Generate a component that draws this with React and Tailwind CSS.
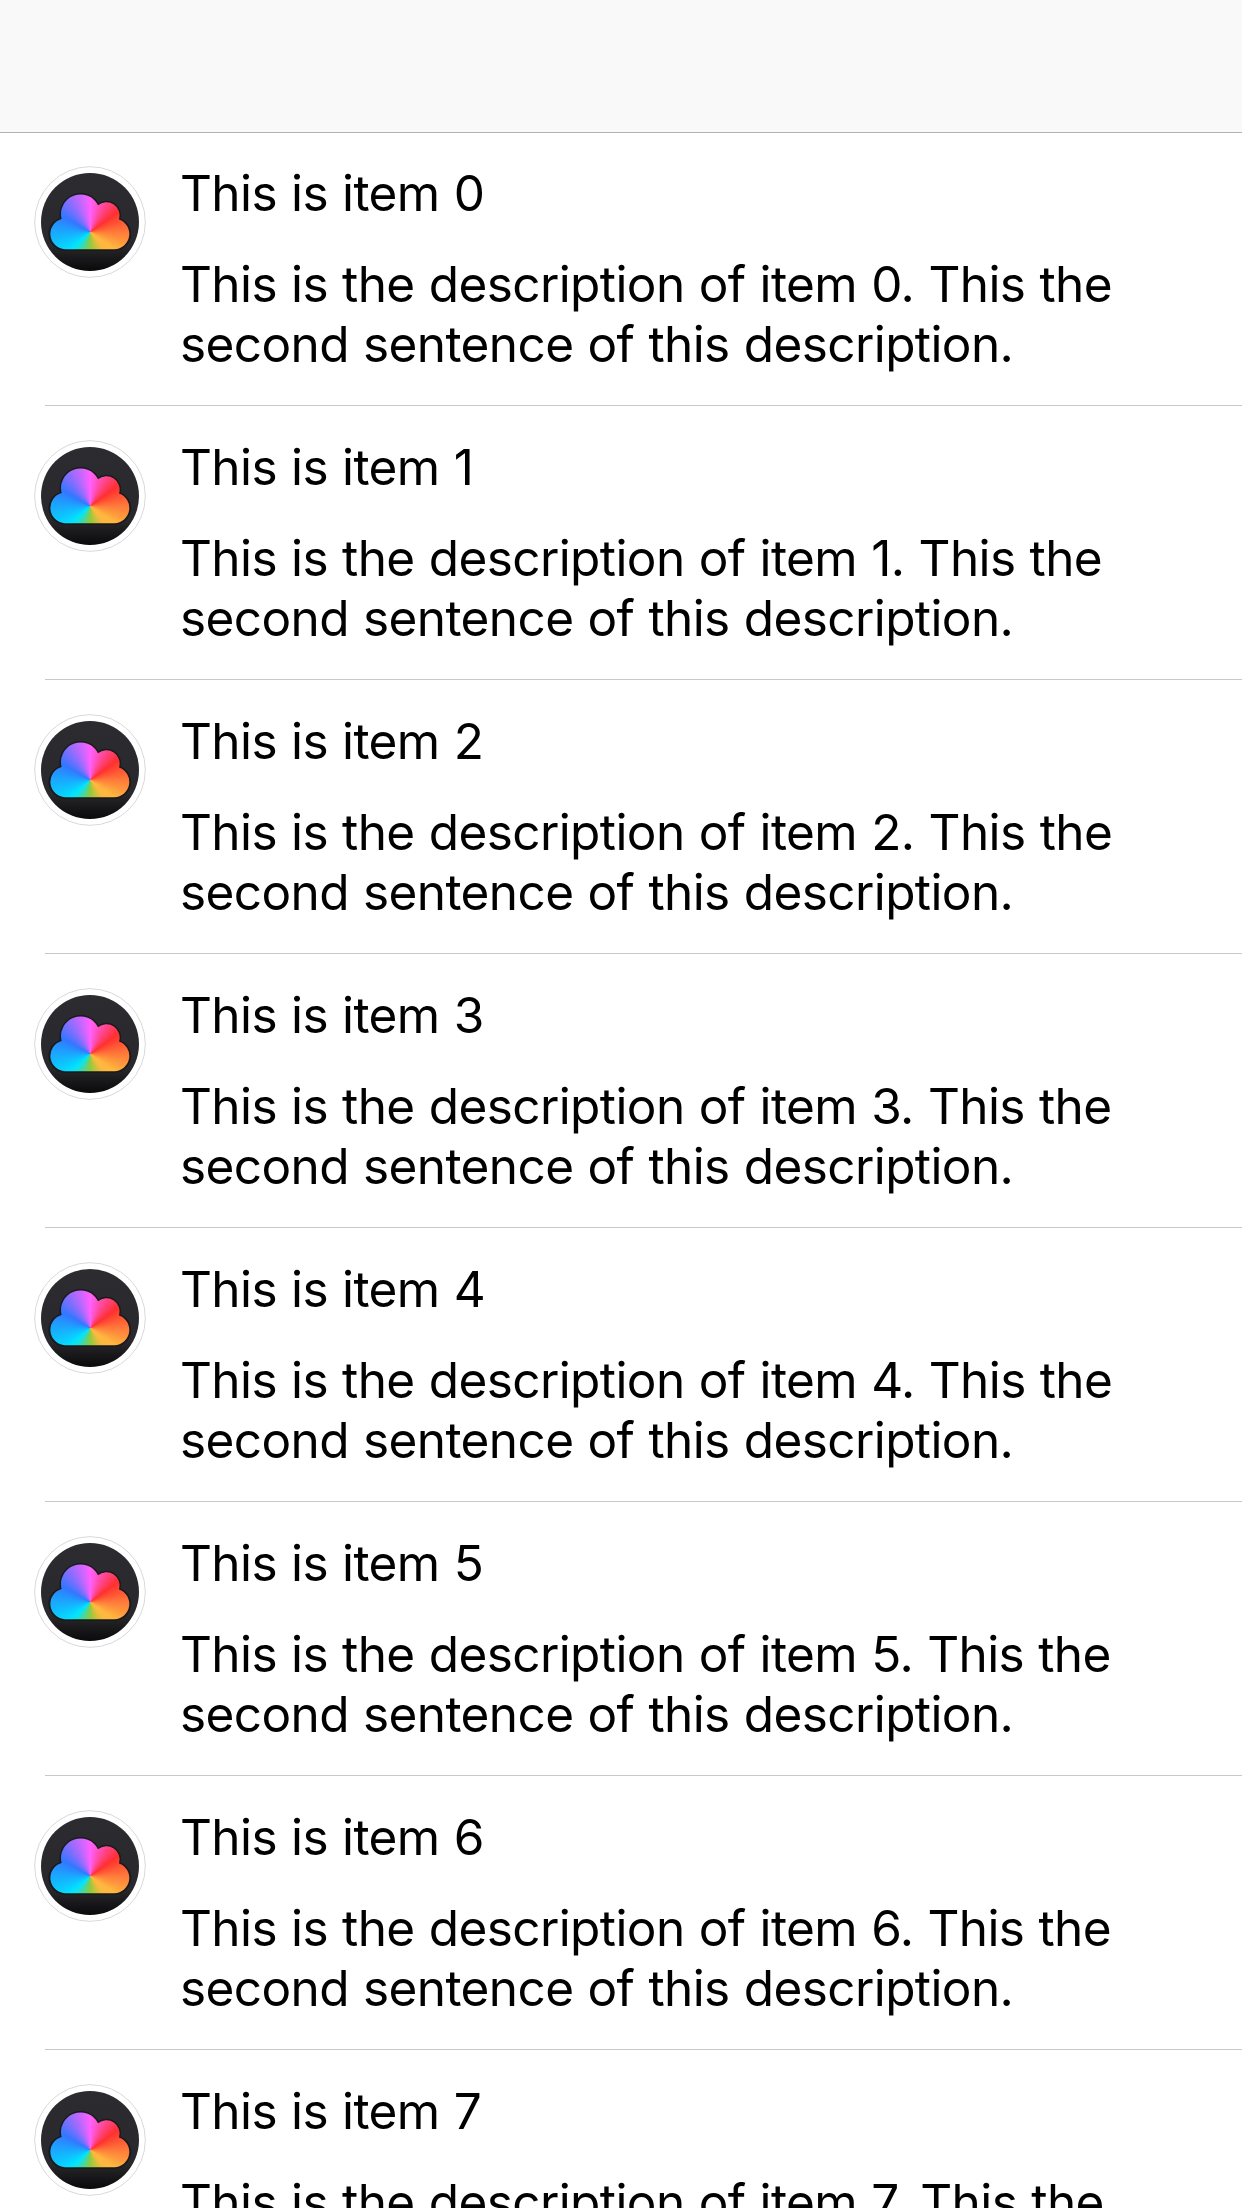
const items = [0, 1, 2, 3, 4, 5, 6, 7];

function CloudAvatar() {
  return (
    <div className="relative mt-[34px] ml-[34px] size-[112px] shrink-0">
      <svg viewBox="42 138 336 336" className="size-full" aria-hidden="true">
        <defs>
          <linearGradient id="disc" x1="0" y1="0" x2="0" y2="1">
            <stop offset="0" stopColor="#2b2b30" />
            <stop offset="0.74" stopColor="#29292d" />
            <stop offset="0.82" stopColor="#1f1f22" />
            <stop offset="1" stopColor="#0a0a0b" />
          </linearGradient>
        </defs>
        <circle cx="210" cy="306" r="166" fill="#fff" stroke="#d9d9d9" strokeWidth="3" />
        <circle cx="210" cy="306" r="147" fill="url(#disc)" />
        <path
          d="M135 388A46 46 0 0 1 125 297.300A58.600 58.600 0 0 1 234 256A39.500 39.500 0 0 1 297 298.200A46 46 0 0 1 283 388Z"
          fill="none"
          stroke="#1a1a1d"
          strokeWidth="9"
        />
      </svg>
      <div className="absolute inset-0 bg-[conic-gradient(from_0deg_at_56.300px_66px,#ff60ff_0deg,#ff3030_54deg,#ff7a3a_90deg,#ffb83f_125deg,#ffb83f_140deg,#8fcb3c_180deg,#00e5ff_228deg,#1aa8ff_270deg,#3377ff_300deg,#ff60ff_360deg)] [clip-path:path('M31_83.200A15.330_15.330_0_0_1_27.670_53.100A19.520_19.520_0_0_1_64_39.330A13.170_13.170_0_0_1_85_53.400A15.330_15.330_0_0_1_80.330_83.200Z')]" />
    </div>
  );
}

export default function App() {
  return (
    <div className="h-[2208px] w-full overflow-hidden bg-white font-['Inter',sans-serif] text-[49.5px] leading-[60px] tracking-[-0.6px] text-black [word-spacing:0.8px]">
      <header className="-mb-px h-[133px] border-b border-[#b2b2b2] bg-[#f9f9f9]" />
      <ul>
        {items.map((n) => (
          <li key={n} className="flex h-[274px] flex-col">
            <div className="flex flex-1">
              <CloudAvatar />
              <div className="ml-[34px] pt-[31px]">
                <h2>This is item {n}</h2>
                <p className="mt-[31px] whitespace-nowrap">
                  This is the description of item {n}. This the
                  <br />
                  second sentence of this description.
                </p>
              </div>
            </div>
            <div className="ml-[45px] h-px shrink-0 bg-[#c8c7cc]" />
          </li>
        ))}
      </ul>
    </div>
  );
}
